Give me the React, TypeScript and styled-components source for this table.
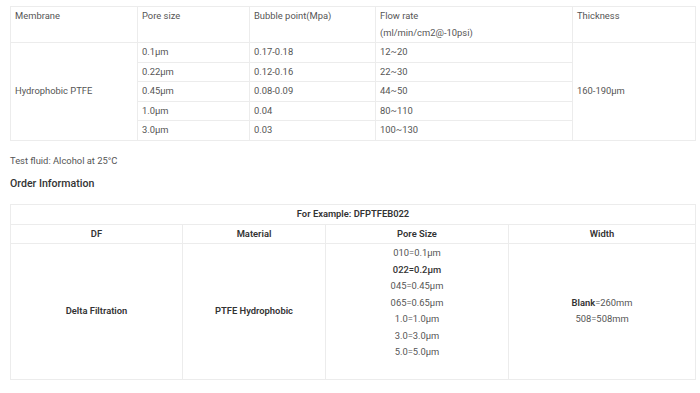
import styled, { createGlobalStyle } from "styled-components";

const GlobalStyle = createGlobalStyle`
  body {
    margin: 0;
    background: #fff;
    font-family: Roboto, "Liberation Sans", sans-serif;
  }
`;

const Page = styled.div`
  width: 685px;
  padding: 6px 0 0 10px;
  color: #555;
  font-size: 9.4px;
  line-height: 16.5px;
`;

const Table = styled.table`
  width: 100%;
  table-layout: fixed;
  border-collapse: collapse;
  border: 1px solid #ececec;
`;

const Cell = styled.td<{ $center?: boolean; $middle?: boolean; $strong?: boolean; $pad?: string }>`
  border: 1px solid #ececec;
  padding: ${(p) => p.$pad || "1px 4px"};
  text-align: ${(p) => (p.$center ? "center" : "left")};
  vertical-align: ${(p) => (p.$middle ? "middle" : "top")};
  font-weight: ${(p) => (p.$strong ? 600 : 400)};
  color: ${(p) => (p.$strong ? "#333" : "#555")};
`;

const Line = styled.div<{ $dark?: boolean }>`
  color: ${(p) => (p.$dark ? "#333" : "inherit")};
  font-weight: ${(p) => (p.$dark ? 500 : 400)};
`;

const Note = styled.p`
  margin: 12px 0 0;
`;

const Heading = styled.h4`
  margin: 7px 0 0;
  font-size: 10.6px;
  line-height: 16px;
  font-weight: 500;
  color: #333;
`;

const OrderTable = styled(Table)`
  margin-top: 12px;
`;

const rows = [
  ["0.1μm", "0.17-0.18", "12~20"],
  ["0.22μm", "0.12-0.16", "22~30"],
  ["0.45μm", "0.08-0.09", "44~50"],
  ["1.0μm", "0.04", "80~110"],
  ["3.0μm", "0.03", "100~130"],
];

const poreSizes = ["010=0.1μm", "022=0.2μm", "045=0.45μm", "065=0.65μm", "1.0=1.0μm", "3.0=3.0μm", "5.0=5.0μm"];

export default function App() {
  return (
    <>
      <GlobalStyle />
      <Page>
        <Table>
          <colgroup>
            <col style={{ width: 127 }} />
            <col style={{ width: 112 }} />
            <col style={{ width: 126 }} />
            <col style={{ width: 197 }} />
            <col style={{ width: 123 }} />
          </colgroup>
          <tbody>
            <tr>
              <Cell>Membrane</Cell>
              <Cell>Pore size</Cell>
              <Cell>Bubble point(Mpa)</Cell>
              <Cell>
                Flow rate
                <br />
                (ml/min/cm2@-10psi)
              </Cell>
              <Cell>Thickness</Cell>
            </tr>
            {rows.map((r, i) => (
              <tr key={r[0]}>
                {i === 0 && (
                  <Cell rowSpan={5} $middle>
                    Hydrophobic PTFE
                  </Cell>
                )}
                <Cell>{r[0]}</Cell>
                <Cell>{r[1]}</Cell>
                <Cell>{r[2]}</Cell>
                {i === 0 && (
                  <Cell rowSpan={5} $middle>
                    160-190μm
                  </Cell>
                )}
              </tr>
            ))}
          </tbody>
        </Table>

        <Note>Test fluid: Alcohol at 25°C</Note>
        <Heading>Order Information</Heading>

        <OrderTable>
          <colgroup>
            <col style={{ width: 172 }} />
            <col style={{ width: 143 }} />
            <col style={{ width: 183 }} />
            <col style={{ width: 187 }} />
          </colgroup>
          <tbody>
            <tr>
              <Cell colSpan={4} $center $strong>
                For Example: DFPTFEB022
              </Cell>
            </tr>
            <tr>
              <Cell $center $strong>DF</Cell>
              <Cell $center $strong>Material</Cell>
              <Cell $center $strong>Pore Size</Cell>
              <Cell $center $strong>Width</Cell>
            </tr>
            <tr>
              <Cell $center $middle $strong>Delta Filtration</Cell>
              <Cell $center $middle $strong>PTFE Hydrophobic</Cell>
              <Cell $center $pad="1px 4px 18px">
                {poreSizes.map((s) => (
                  <Line key={s} $dark={s.startsWith("022")}>
                    {s}
                  </Line>
                ))}
              </Cell>
              <Cell $center $middle>
                <Line>
                  <strong style={{ color: "#333", fontWeight: 600 }}>Blank</strong>=260mm
                </Line>
                <Line>508=508mm</Line>
              </Cell>
            </tr>
          </tbody>
        </OrderTable>
      </Page>
    </>
  );
}
